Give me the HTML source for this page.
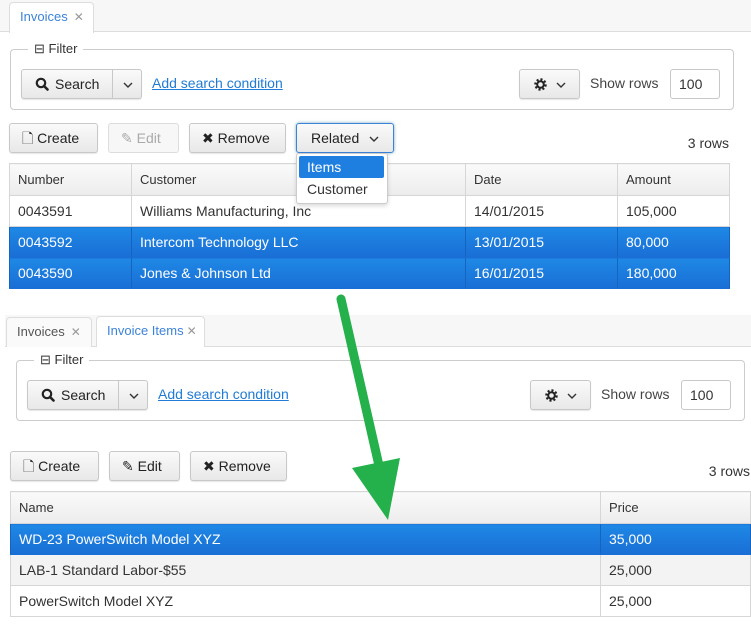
<!DOCTYPE html><html><head><style>
*{box-sizing:border-box}
body{margin:0;width:751px;height:625px;background:#fff;font-family:"Liberation Sans",sans-serif;font-size:14px;color:#333;position:relative;overflow:hidden}
.a{position:absolute}
.tabbar{position:absolute;background:#f7f7f7;border-bottom:1px solid #ddd}
.tab{position:absolute;border:1px solid #ddd;border-bottom:none;border-radius:4px 4px 0 0;background:#fafafa;padding:0 0 0 10px;line-height:28px;font-size:13px;color:#555}
.tab.on{background:#fff;color:#3b83d9;height:31px}
.tab .x{color:#999;font-size:12px;margin-left:6px}
.fs{position:absolute;border:1px solid #ccc;border-radius:4px}
.lg{position:absolute;background:#fff;padding:0 6px;font-size:13px;line-height:14px}
.btn{position:absolute;height:30px;border:1px solid #c8c8c8;border-radius:3px;background:linear-gradient(#fafafa,#e8e8e8);box-shadow:0 1px 1px rgba(0,0,0,.1);line-height:28px;font-size:14px;color:#222;white-space:nowrap}
.btn svg{position:absolute}
.lnk{position:absolute;color:#1f7bd6;text-decoration:underline;font-size:14px}
.inp{position:absolute;height:30px;border:1px solid #c8c8c8;border-radius:3px;line-height:28px;padding-left:8px;background:#fff}
table{position:absolute;border-collapse:collapse;font-size:14px}
td{border:1px solid #d6d6d6;padding:0 0 0 8px;height:31px;white-space:nowrap}
th{border:1px solid #d6d6d6;padding:0 0 0 8px;height:32px;text-align:left;font-weight:normal;font-size:13px;background:linear-gradient(#fafafa,#ececec)}
tr.s td{background:linear-gradient(#1e88e5,#1a6ed5);color:#fff;border-color:#1a6ed5 #1565c0}
tr.g td{background:#f3f3f3}
</style></head><body>

<div class="tabbar" style="left:0;top:0;width:751px;height:32px"></div>
<div class="tab on" style="left:9px;top:2px;width:85px">Invoices<span class="x">✕</span></div>

<div class="fs" style="left:10px;top:49px;width:724px;height:61px"></div>
<div class="lg" style="left:28px;top:42px">⊟ Filter</div>
<div class="btn" style="left:21px;top:69px;width:121px">
<svg style="left:13px;top:7px" width="14" height="14" viewBox="0 0 14 14"><circle cx="6" cy="6" r="4.2" fill="none" stroke="#222" stroke-width="2.2"/><line x1="9" y1="9" x2="12.5" y2="12.5" stroke="#222" stroke-width="2.6" stroke-linecap="round"/></svg>
<span style="position:absolute;left:33px">Search</span><span style="position:absolute;left:90px;top:0;height:28px;border-left:1px solid #c8c8c8;width:30px"></span>
<svg style="left:101px;top:12px" width="10" height="6"><polyline points="1,1 5,5 9,1" fill="none" stroke="#333" stroke-width="1.4"/></svg></div>
<div class="lnk" style="left:152px;top:75px">Add search condition</div>
<div class="btn" style="left:519px;top:69px;width:61px">
<svg style="left:14px;top:8px" width="13" height="13" viewBox="0 0 13 13"><circle cx="6.5" cy="6.5" r="4.5" fill="none" stroke="#222" stroke-width="3.5" stroke-dasharray="1.8 1.7"/><circle cx="6.5" cy="6.5" r="3.3" fill="none" stroke="#222" stroke-width="2"/></svg>
<svg style="left:36px;top:12px" width="10" height="6"><polyline points="1,1 5,5 9,1" fill="none" stroke="#333" stroke-width="1.4"/></svg></div>
<div class="a" style="left:590px;top:75px;color:#444">Show rows</div>
<div class="inp" style="left:670px;top:69px;width:50px">100</div>

<div class="btn" style="left:9px;top:123px;width:89px;padding-left:12px">🗋 Create</div>
<div class="btn" style="left:108px;top:123px;width:71px;padding-left:12px;color:#aaa;background:#f7f7f7;border-color:#ddd;box-shadow:none">✎ Edit</div>
<div class="btn" style="left:189px;top:123px;width:97px;padding-left:12px">✖ Remove</div>
<div class="btn" style="left:296px;top:123px;width:98px;padding-left:14px;border-color:#3b83d9;box-shadow:0 0 3px #7ab">Related
<svg style="left:72px;top:12px" width="10" height="6"><polyline points="1,1 5,5 9,1" fill="none" stroke="#333" stroke-width="1.4"/></svg></div>
<div class="a" style="right:22px;top:135px">3 rows</div>

<table style="left:9px;top:163px;width:721px">
<tr><th style="width:122px">Number</th><th style="width:334px">Customer</th><th style="width:152px">Date</th><th>Amount</th></tr>
<tr><td style="height:30px">0043591</td><td>Williams Manufacturing, Inc</td><td>14/01/2015</td><td>105,000</td></tr>
<tr class="s"><td>0043592</td><td>Intercom Technology LLC</td><td>13/01/2015</td><td>80,000</td></tr>
<tr class="s"><td style="height:30px">0043590</td><td>Jones &amp; Johnson Ltd</td><td>16/01/2015</td><td>180,000</td></tr>
</table>

<div class="a" style="left:296px;top:153px;width:92px;height:51px;background:#fff;border:1px solid #ccc;border-radius:3px;box-shadow:0 2px 4px rgba(0,0,0,.15)"></div>
<div class="a" style="left:299px;top:156px;width:85px;height:22px;background:#1f7fe0;border-radius:2px;color:#fff;padding-left:8px;line-height:22px">Items</div>
<div class="a" style="left:307px;top:181px">Customer</div>

<div class="tabbar" style="left:5px;top:315px;width:746px;height:32px"></div>
<div class="tab" style="left:6px;top:317px;width:86px;height:30px">Invoices<span class="x">✕</span></div>
<div class="tab on" style="left:96px;top:316px;width:109px">Invoice Items<span class="x" style="margin-left:3px">✕</span></div>

<div class="fs" style="left:16px;top:360px;width:729px;height:61px"></div>
<div class="lg" style="left:34px;top:353px">⊟ Filter</div>
<div class="btn" style="left:27px;top:380px;width:121px">
<svg style="left:13px;top:7px" width="14" height="14" viewBox="0 0 14 14"><circle cx="6" cy="6" r="4.2" fill="none" stroke="#222" stroke-width="2.2"/><line x1="9" y1="9" x2="12.5" y2="12.5" stroke="#222" stroke-width="2.6" stroke-linecap="round"/></svg>
<span style="position:absolute;left:33px">Search</span><span style="position:absolute;left:90px;top:0;height:28px;border-left:1px solid #c8c8c8;width:30px"></span>
<svg style="left:101px;top:12px" width="10" height="6"><polyline points="1,1 5,5 9,1" fill="none" stroke="#333" stroke-width="1.4"/></svg></div>
<div class="lnk" style="left:158px;top:386px">Add search condition</div>
<div class="btn" style="left:530px;top:380px;width:61px">
<svg style="left:14px;top:8px" width="13" height="13" viewBox="0 0 13 13"><circle cx="6.5" cy="6.5" r="4.5" fill="none" stroke="#222" stroke-width="3.5" stroke-dasharray="1.8 1.7"/><circle cx="6.5" cy="6.5" r="3.3" fill="none" stroke="#222" stroke-width="2"/></svg>
<svg style="left:36px;top:12px" width="10" height="6"><polyline points="1,1 5,5 9,1" fill="none" stroke="#333" stroke-width="1.4"/></svg></div>
<div class="a" style="left:601px;top:386px;color:#444">Show rows</div>
<div class="inp" style="left:681px;top:380px;width:50px">100</div>

<div class="btn" style="left:10px;top:451px;width:89px;padding-left:12px">🗋 Create</div>
<div class="btn" style="left:109px;top:451px;width:71px;padding-left:12px">✎ Edit</div>
<div class="btn" style="left:190px;top:451px;width:97px;padding-left:12px">✖ Remove</div>
<div class="a" style="right:1px;top:463px">3 rows</div>

<table style="left:10px;top:491px;width:741px">
<tr><th style="width:590px">Name</th><th>Price</th></tr>
<tr class="s"><td>WD-23 PowerSwitch Model XYZ</td><td>35,000</td></tr>
<tr class="g"><td>LAB-1 Standard Labor-$55</td><td>25,000</td></tr>
<tr><td style="height:30px">PowerSwitch Model XYZ</td><td>25,000</td></tr>
</table>

<svg class="a" style="left:0;top:0" width="751" height="625"><line x1="341" y1="299" x2="380" y2="470" stroke="#24b04b" stroke-width="9" stroke-linecap="round"/><polygon points="352,468 400,458 388,520" fill="#24b04b"/></svg>
</body></html>
